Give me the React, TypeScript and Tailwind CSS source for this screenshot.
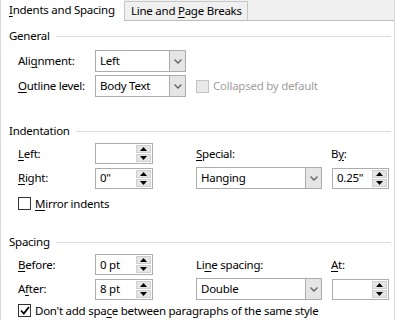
import React from 'react';

const font =
  "font-['Noto_Sans',sans-serif] text-[11.5px] tracking-[-0.25px] leading-[16px] text-black";

function Key({ children }: { children: React.ReactNode }) {
  return <span className="underline underline-offset-[2px]">{children}</span>;
}

function Spinner({ value, width = 58 }: { value?: string; width?: number }) {
  return (
    <div
      className="flex h-[21px] items-stretch border border-[#abadb3] bg-white"
      style={{ width }}
    >
      <div className="flex flex-1 items-center whitespace-nowrap pl-[4px]">{value}</div>
      <div className="my-[1px] mr-[1px] flex w-[15px] flex-col gap-px">
        <div className="flex flex-1 items-center justify-center border border-[#cfcfcf] bg-[#e5e5e5]">
          <svg width="7" height="4" viewBox="0 0 7 4">
            <polygon points="0,4 3.5,0 7,4" fill="#000" />
          </svg>
        </div>
        <div className="flex flex-1 items-center justify-center border border-[#cfcfcf] bg-[#e5e5e5]">
          <svg width="7" height="4" viewBox="0 0 7 4">
            <polygon points="0,0 3.5,4 7,0" fill="#000" />
          </svg>
        </div>
      </div>
    </div>
  );
}

function Select({ value, width }: { value: string; width: number }) {
  return (
    <div
      className="flex h-[22px] items-stretch border border-[#acacac] bg-white"
      style={{ width }}
    >
      <div className="flex flex-1 items-center whitespace-nowrap pl-[4px]">{value}</div>
      <div className="flex w-[16px] items-center justify-center border-l border-[#acacac] bg-[#e5e5e5]">
        <svg width="8" height="5" viewBox="0 0 8 5">
          <polyline points="0.5,0.5 4,4 7.5,0.5" fill="none" stroke="#606060" strokeWidth="1.3" />
        </svg>
      </div>
    </div>
  );
}

function Header({ title, className }: { title: string; className: string }) {
  return (
    <div className={`flex items-center pl-[8px] pr-[3px] ${className}`}>
      <span className="whitespace-nowrap">{title}</span>
      <div className="ml-[6px] h-px flex-1 bg-[#dcdcdc]" />
    </div>
  );
}

function Check({ checked, disabled }: { checked?: boolean; disabled?: boolean }) {
  return (
    <div
      className={`flex h-[13px] w-[13px] shrink-0 items-center justify-center border ${
        disabled ? 'border-[#c4c4c4] bg-[#e9e9e9]' : 'border-[#333333] bg-white'
      }`}
    >
      {checked && (
        <svg width="10" height="9" viewBox="0 0 10 9">
          <polyline points="1,4.5 3.8,7.5 9,1" fill="none" stroke="#000" strokeWidth="1.8" />
        </svg>
      )}
    </div>
  );
}

export default function App() {
  return (
    <div className={`h-[320px] w-[397px] bg-white ${font}`}>
      <div className="h-full w-[395px] border-x border-[#d9d9d9]">
        {/* Tabs */}
        <div className="flex h-[21px]">
          <div className="w-[123px] whitespace-nowrap bg-white pl-[8px] pt-[2px]">
            <Key>I</Key>ndents and Spacing
          </div>
          <div className="flex flex-1 items-end border-b border-[#bdbdbd] bg-[#f0f0f0]">
            <div className="h-[19px] w-[124px] whitespace-nowrap border-x border-t border-[#c8c8c8] pl-[6px] pt-[1px]">
              Line and <Key>P</Key>age Breaks
            </div>
          </div>
        </div>

        {/* General */}
        <Header title="General" className="mt-[7px]" />
        <div className="mt-[6px] flex items-center pl-[17px]">
          <div className="w-[77px] whitespace-nowrap">
            Ali<Key>g</Key>nment:
          </div>
          <Select value="Left" width={91} />
        </div>
        <div className="mt-[3px] flex items-center pl-[17px]">
          <div className="w-[77px] whitespace-nowrap">
            <Key>O</Key>utline level:
          </div>
          <Select value="Body Text" width={91} />
          <div className="ml-[10px] flex items-center gap-[4px] whitespace-nowrap text-[#a0a0a0]">
            <Check disabled />
            <span>Collapsed by default</span>
          </div>
        </div>

        {/* Indentation */}
        <Header title="Indentation" className="mt-[26px]" />
        <div className="mt-[4px] flex items-center pl-[17px]">
          <div className="w-[77px]">
            <Key>L</Key>eft:
          </div>
          <Spinner />
          <div className="ml-[43px] w-[135px]">
            <Key>S</Key>pecial:
          </div>
          <div>
            B<Key>y</Key>:
          </div>
        </div>
        <div className="mt-[3px] flex items-center pl-[17px]">
          <div className="w-[77px]">
            <Key>R</Key>ight:
          </div>
          <Spinner value={'0"'} />
          <div className="ml-[43px]">
            <Select value="Hanging" width={126} />
          </div>
          <div className="ml-[10px]">
            <Spinner value={'0.25"'} width={57} />
          </div>
        </div>
        <div className="mt-[8px] flex h-[13px] items-center gap-[4px] whitespace-nowrap pl-[17px]">
          <Check />
          <span>
            <Key>M</Key>irror indents
          </span>
        </div>

        {/* Spacing */}
        <Header title="Spacing" className="mt-[24px]" />
        <div className="mt-[4px] flex items-center pl-[17px]">
          <div className="w-[77px]">
            <Key>B</Key>efore:
          </div>
          <Spinner value="0 pt" />
          <div className="ml-[43px] w-[135px] whitespace-nowrap">
            Li<Key>n</Key>e spacing:
          </div>
          <div>
            <Key>A</Key>t:
          </div>
        </div>
        <div className="mt-[3px] flex items-center pl-[17px]">
          <div className="w-[77px]">
            A<Key>f</Key>ter:
          </div>
          <Spinner value="8 pt" />
          <div className="ml-[43px]">
            <Select value="Double" width={126} />
          </div>
          <div className="ml-[10px]">
            <Spinner width={57} />
          </div>
        </div>
        <div className="mt-[4px] flex h-[13px] items-center gap-[4px] whitespace-nowrap pl-[17px]">
          <Check checked />
          <span>
            Don't add spa<Key>c</Key>e between paragraphs of the same style
          </span>
        </div>
      </div>
    </div>
  );
}
